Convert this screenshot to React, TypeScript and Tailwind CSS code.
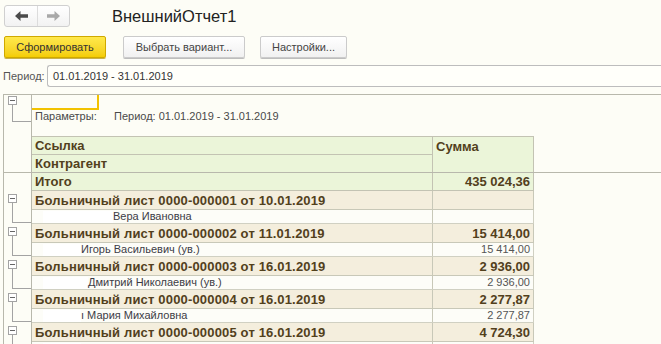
import React from "react";

const groups = [
  { title: "Больничный лист 0000-000001 от 10.01.2019", sum: "", name: "Вера Ивановна", pad: "w-[70px]", dsum: "" },
  { title: "Больничный лист 0000-000002 от 11.01.2019", sum: "15 414,00", name: "Игорь Васильевич (ув.)", pad: "w-[38px]", dsum: "15 414,00" },
  { title: "Больничный лист 0000-000003 от 16.01.2019", sum: "2 936,00", name: "Дмитрий Николаевич (ув.)", pad: "w-[45px]", dsum: "2 936,00" },
  { title: "Больничный лист 0000-000004 от 16.01.2019", sum: "2 277,87", name: "ı Мария Михайловна", pad: "w-[38px]", dsum: "2 277,87" },
  { title: "Больничный лист 0000-000005 от 16.01.2019", sum: "4 724,30", name: "", pad: "w-[38px]", dsum: "" },
];

function MinusBox() {
  return (
    <div className="w-[9px] h-[9px] border border-[#a3a3a3] bg-white flex items-center justify-center shrink-0">
      <div className="w-[5px] h-[1px] bg-[#666]" />
    </div>
  );
}

function BackArrow({ color }: { color: string }) {
  return (
    <svg width="13" height="10" viewBox="0 0 13 10">
      <path d="M0 5 L5.5 0 L5.5 3.3 L13 3.3 L13 6.7 L5.5 6.7 L5.5 10 Z" fill={color} />
    </svg>
  );
}

function FwdArrow({ color }: { color: string }) {
  return (
    <svg width="13" height="10" viewBox="0 0 13 10">
      <path d="M13 5 L7.5 0 L7.5 3.3 L0 3.3 L0 6.7 L7.5 6.7 L7.5 10 Z" fill={color} />
    </svg>
  );
}

export default function App() {
  return (
    <div className="w-[661px] h-[344px] overflow-hidden bg-[#fdfdf6] font-['Liberation_Sans',Arial,sans-serif] text-[#333]">
      {/* top bar */}
      <div className="flex items-center h-[22px] mt-[5px] pl-[4px]">
        <div className="flex w-[66px] h-[22px] border border-[#d0d0d0] rounded-[3px] bg-gradient-to-b from-white to-[#f2f2f2]">
          <div className="w-[33px] flex items-center justify-center border-r border-[#dcdcdc]">
            <BackArrow color="#4a4a4a" />
          </div>
          <div className="flex-1 flex items-center justify-center">
            <FwdArrow color="#a8a8a8" />
          </div>
        </div>
        <div className="ml-[42px] text-[16.5px] leading-none text-[#222]">ВнешнийОтчет1</div>
      </div>

      {/* buttons */}
      <div className="flex items-center mt-[9px] pl-[4px] h-[22px]">
        <div className="w-[102px] h-[22px] flex items-center justify-center rounded-[2px] border border-[#cfa900] bg-gradient-to-b from-[#ffe94a] to-[#f4cd00] text-[11px] text-[#333] shadow-[0_1px_0_#c9b24a]">
          Сформировать
        </div>
        <div className="ml-[17px] w-[122px] h-[22px] flex items-center justify-center rounded-[2px] border border-[#cbcbcb] bg-gradient-to-b from-white to-[#f1f1f1] text-[11px] text-[#444] shadow-[0_1px_0_#bdbdbd]">
          Выбрать вариант...
        </div>
        <div className="ml-[15px] w-[87px] h-[22px] flex items-center justify-center rounded-[2px] border border-[#cbcbcb] bg-gradient-to-b from-white to-[#f1f1f1] text-[11px] text-[#444] shadow-[0_1px_0_#bdbdbd]">
          Настройки...
        </div>
      </div>

      {/* period */}
      <div className="flex items-center mt-[7px] h-[22px]">
        <div className="w-[47px] pl-[3px] text-[11px] text-[#555]">Период:</div>
        <div className="flex-1 h-[22px] flex items-center pl-[5px] border border-r-0 border-[#bdbdbd] rounded-l-[3px] bg-[#fffffa] text-[11px] text-[#333]">
          01.01.2019 - 31.01.2019
        </div>
      </div>

      {/* spreadsheet */}
      <div className="mt-[7px] ml-[3px] border-l border-t border-[#b8b8ac] text-[#52401c]">
        {/* header section */}
        <div className="flex border-b border-[#b8b8ac]">
          <div className="w-[28px] shrink-0 border-r border-[#b8b8ac] flex flex-col pl-[4px] pt-[1px]">
            <MinusBox />
            <div className="ml-[4px] w-[19px] h-[17px] border-l border-b border-[#a3a3a3]" />
          </div>
          <div className="flex-1 flex flex-col">
            <div className="h-[41px] flex flex-col">
              <div className="w-[67px] h-[15px] border-r-2 border-b-2 border-[#f2c200]" />
              <div className="flex items-center h-[13px] text-[11px] text-[#4a4a4a] leading-none">
                <span className="pl-[3px] w-[82px]">Параметры:</span>
                <span>Период: 01.01.2019 - 31.01.2019</span>
              </div>
            </div>
            <div className="flex w-[502px] border-t border-r border-[#c3c3b3] bg-[#ebf5d9] font-bold text-[13px] leading-none">
              <div className="w-[401px] border-r border-[#c3c3b3] flex flex-col">
                <div className="h-[18px] border-b border-[#c3c3b3] flex items-center pl-[3px]">Ссылка</div>
                <div className="h-[17px] flex items-center pl-[3px]">Контрагент</div>
              </div>
              <div className="flex-1 pl-[3px] pt-[3px]">Сумма</div>
            </div>
          </div>
        </div>

        {/* Итого row */}
        <div className="flex">
          <div className="w-[28px] shrink-0 border-r border-[#b8b8ac] h-[18px]" />
          <div className="flex w-[502px] h-[18px] border-r border-b border-[#c3c3b3] bg-[#ebf5d9] font-bold text-[13px] leading-none">
            <div className="w-[401px] border-r border-[#c3c3b3] flex items-center pl-[3px]">Итого</div>
            <div className="flex-1 flex items-center justify-end pr-[3px]">435 024,36</div>
          </div>
        </div>

        {groups.map((g, i) => (
          <div key={i} className="flex">
            <div className="w-[28px] shrink-0 border-r border-[#b8b8ac] flex flex-col pl-[4px] pt-[3px]">
              <MinusBox />
              <div className="ml-[4px] w-[19px] h-[20px] border-l border-b border-[#a3a3a3]" />
            </div>
            <div className="flex flex-col">
              <div className="flex w-[502px] h-[19px] border-r border-b border-[#c8c8b8] bg-[#f4eedd] font-bold text-[13px] leading-none">
                <div className="w-[401px] border-r border-[#c8c8b8] flex items-center pl-[3px] whitespace-nowrap tracking-[0.17px]">{g.title}</div>
                <div className="flex-1 flex items-center justify-end pr-[3px]">{g.sum}</div>
              </div>
              <div className="flex w-[502px] h-[14px] border-r border-b border-[#d0d0c2] bg-[#fdfdf8] text-[11px] leading-none text-[#3c3c46]">
                <div className="w-[401px] border-r border-[#c8c8b8] flex items-center pl-[11px] whitespace-nowrap">
                  <span className={`${g.pad} h-[12px] bg-white`} />
                  <span>{g.name}</span>
                </div>
                <div className="flex-1 flex items-center justify-end pr-[3px] text-[#555]">{g.dsum}</div>
              </div>
            </div>
          </div>
        ))}
      </div>
    </div>
  );
}
